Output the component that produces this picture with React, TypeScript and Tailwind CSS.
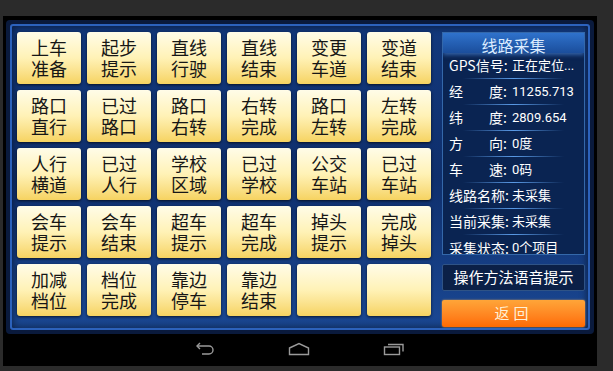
const rows: string[][] = [
  ["上车\n准备", "起步\n提示", "直线\n行驶", "直线\n结束", "变更\n车道", "变道\n结束"],
  ["路口\n直行", "已过\n路口", "路口\n右转", "右转\n完成", "路口\n左转", "左转\n完成"],
  ["人行\n横道", "已过\n人行", "学校\n区域", "已过\n学校", "公交\n车站", "已过\n车站"],
  ["会车\n提示", "会车\n结束", "超车\n提示", "超车\n完成", "掉头\n提示", "完成\n掉头"],
  ["加减\n档位", "档位\n完成", "靠边\n停车", "靠边\n结束", "", ""],
];

const info: { label: string; value: string; split?: boolean }[] = [
  { label: "GPS信号:", value: "正在定位..." },
  { label: "经度", value: "11255.713", split: true },
  { label: "纬度", value: "2809.654", split: true },
  { label: "方向", value: "0度", split: true },
  { label: "车速", value: "0码", split: true },
  { label: "线路名称:", value: "未采集" },
  { label: "当前采集:", value: "未采集" },
  { label: "采集状态:", value: "0个项目" },
];

function Key({ text }: { text: string }) {
  const lines = text ? text.split("\n") : [];
  return (
    <div className="flex h-[52px] w-[64px] flex-col items-center justify-center rounded-[3px] bg-gradient-to-b from-[#fffce8] via-[#fff2b6] to-[#f6d360] text-[18px] leading-[21px] text-[#161616] shadow-[0_1px_3px_rgba(0,0,0,0.7)]">
      {lines.map((l) => (
        <span key={l}>{l}</span>
      ))}
    </div>
  );
}

function InfoRow({ label, value, split, last }: { label: string; value: string; split?: boolean; last?: boolean }) {
  return (
    <div className="flex h-[26px] shrink-0 flex-col">
      <div className="flex flex-1 items-center pl-[6px] text-[14px] text-white">
        {split ? (
          <span className="flex w-[58px] justify-between">
            <span>{label[0]}</span>
            <span>{label[1]}:</span>
          </span>
        ) : (
          <span className="w-[58px] whitespace-nowrap">{label}</span>
        )}
        <span className="ml-[5px] whitespace-nowrap font-['Roboto','Noto_Sans_CJK_SC',sans-serif] text-[13px]">{value}</span>
      </div>
      {!last && <div className="mx-[20px] h-px bg-gradient-to-r from-transparent via-[#5a9ae6] to-transparent" />}
    </div>
  );
}

function NavBack() {
  return (
    <svg width="20" height="14" viewBox="0 0 20 14" fill="none" stroke="#9a9a9a" strokeWidth="1.4">
      <path d="M2 4 H14 A4 4 0 0 1 14 12 H7" />
      <path d="M5 1 L2 4 L5 7" />
    </svg>
  );
}

function NavHome() {
  return (
    <svg width="22" height="14" viewBox="0 0 22 14" fill="none" stroke="#9a9a9a" strokeWidth="1.4">
      <path d="M1.5 6 L11 1.5 L20.5 6 V12.5 H1.5 Z" />
    </svg>
  );
}

function NavRecent() {
  return (
    <svg width="22" height="14" viewBox="0 0 22 14" fill="none" stroke="#9a9a9a" strokeWidth="1.4">
      <rect x="1.5" y="5" width="15" height="7.5" />
      <path d="M5 2.5 H20 V9.5" />
    </svg>
  );
}

export default function App() {
  return (
    <div className="h-[371px] w-[613px] overflow-hidden bg-[#2b2b2b] pl-[3px] pt-[16px] font-['Noto_Sans_CJK_SC','Noto_Sans',sans-serif]">
      <div className="flex h-[350px] w-[594px] flex-col bg-black">
        <div className="ml-[3px] mt-[4px] w-[588px] rounded-[4px] bg-[#0a1a3c] p-[4px]">
          <div className="flex h-[306px] w-[580px] rounded-[3px] border-2 border-[#2c62bc] bg-gradient-to-b from-[#12387c] via-[#0f2f6c] to-[#1a4894] pl-[5px] pt-[6px] shadow-[inset_0_0_8px_rgba(0,0,0,0.6)]">
            <div className="grid grid-cols-[repeat(6,64px)] grid-rows-[repeat(5,52px)] gap-[6px]">
              {rows.flat().map((t, i) => (
                <Key key={i} text={t} />
              ))}
            </div>
            <div className="ml-[11px] flex w-[143px] flex-col">
              <div className="h-[223px] overflow-hidden border border-[#3468aa] bg-[#0a2452]">
                <div className="flex h-[20px] items-center justify-center bg-gradient-to-b from-[#2f72cc] to-[#1b4e9c] pt-[3px] text-[16px] text-[#dcecff] shadow-[0_2px_4px_rgba(90,160,255,0.5)]">
                  线路采集
                </div>
                {info.map((r, i) => (
                  <InfoRow key={r.label} {...r} last={i === info.length - 1} />
                ))}
              </div>
              <div className="mt-[9px] flex h-[27px] items-center justify-center rounded-[2px] border border-[#2f5386] bg-[#0b2047] text-[15px] text-white">
                操作方法语音提示
              </div>
              <div className="mt-[9px] flex h-[27px] items-center justify-center rounded-[2px] bg-gradient-to-b from-[#ffa538] to-[#ff6a00] text-[15px] tracking-[4px] text-[#fff1d6] shadow-[0_0_2px_rgba(255,180,80,0.8)]">
                返回
              </div>
            </div>
          </div>
        </div>
        <div className="flex flex-1 items-center justify-center pb-[2px]">
          <div className="flex w-[210px] items-center justify-between">
            <NavBack />
            <NavHome />
            <NavRecent />
          </div>
        </div>
      </div>
    </div>
  );
}
